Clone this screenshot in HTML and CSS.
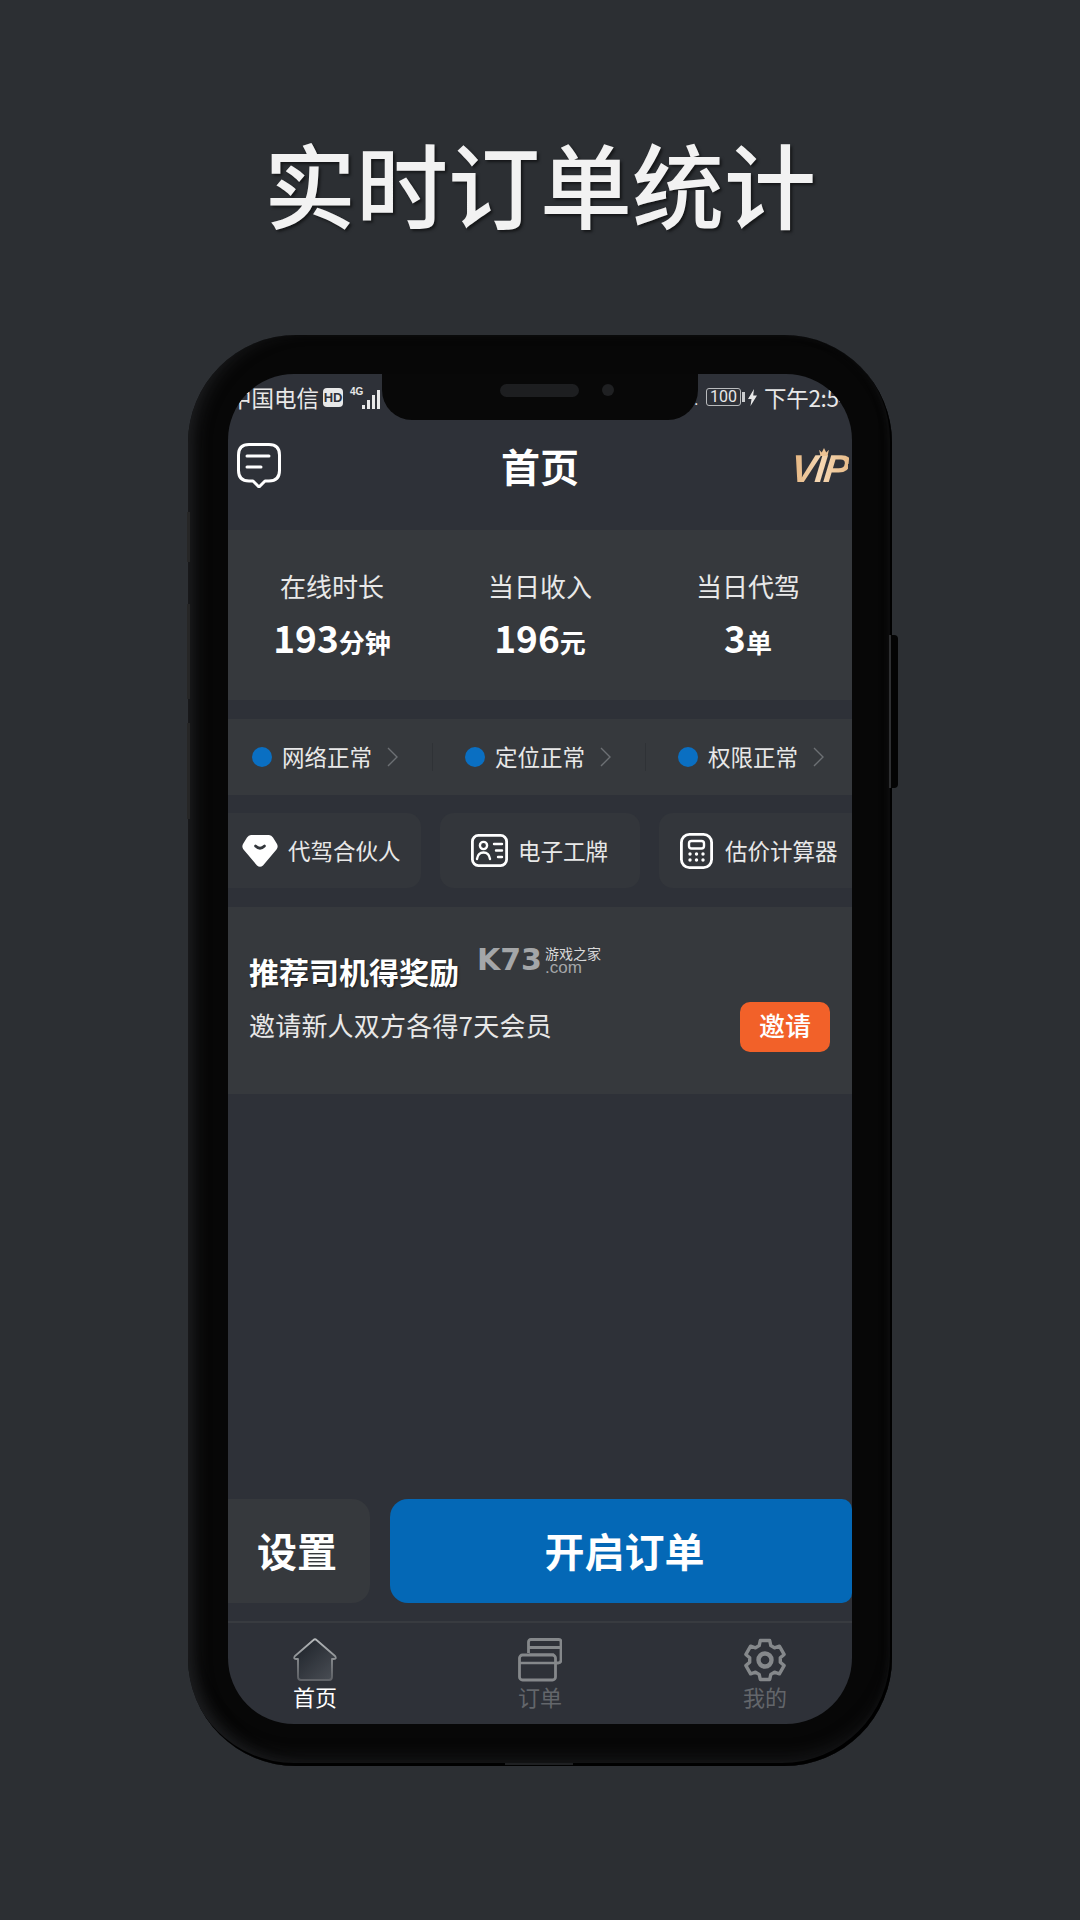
FILE: index.html
```html
<!DOCTYPE html>
<html lang="zh-CN">
<head>
    <meta charset="UTF-8">
    <meta name="viewport" content="width=device-width, initial-scale=1.0">
    <title>实时订单统计</title>

    <link rel="stylesheet" href="styles.css">
</head>
<body>

    <h1 class="promo-title">实时订单统计</h1>

    <div class="phone">
        <span class="side-btn side-power"></span>
        <span class="side-btn side-mute"></span>
        <span class="side-btn side-up"></span>
        <span class="side-btn side-down"></span>
        <span class="chin"></span>

        <div class="screen">
            <!-- Notch -->
            <div class="notch">
                <span class="speaker"></span>
                <span class="camera"></span>
            </div>

            <!-- Status bar -->
            <div class="statusbar">
                <div class="status-left">
                    <span>中国电信</span>
                    <span class="hd">HD</span>
                    <span class="net">4G</span>
                    <svg class="signal" width="20" height="20" viewBox="0 0 20 20">
                        <rect x="0" y="16" width="3" height="4" fill="#e8e8e8"/>
                        <rect x="5" y="11" width="3" height="9" fill="#e8e8e8"/>
                        <rect x="10" y="6" width="3" height="14" fill="#e8e8e8"/>
                        <rect x="15" y="1" width="3" height="19" fill="#e8e8e8"/>
                    </svg>
                </div>
                <div class="status-right">
                    <span class="dot-mark">.</span>
                    <span class="battery">100</span>
                    <span class="battery-nub"></span>
                    <svg class="bolt" width="9" height="17" viewBox="0 0 9 17">
                        <path d="M6 0 L0 10 H3.5 L2.5 17 L9 6.5 H5.2 Z" fill="#e8e8e8"/>
                    </svg>
                    <span class="clock">下午2:54</span>
                </div>
            </div>

            <!-- Header -->
            <header class="topbar">
                <svg class="chat-icon" width="44" height="45" viewBox="0 0 44 45">
                    <path d="M12 1.5 H32 Q42.5 1.5 42.5 12 V27.5 Q42.5 38 32 38 H28 L22 44 L16 38 H12 Q1.5 38 1.5 27.5 V12 Q1.5 1.5 12 1.5 Z" fill="none" stroke="#fff" stroke-width="3" stroke-linejoin="round"/>
                    <path d="M10 13 H32 M10 24 H24" stroke="#fff" stroke-width="3" stroke-linecap="round"/>
                </svg>
                <div class="page-title">首页</div>
                <div class="vip">
                    <span class="vip-text">VIP</span>
                    <svg class="vip-crown" width="10" height="8" viewBox="0 0 11 9">
                        <path d="M0 2 L3 5 L5.5 0 L8 5 L11 2 L9.5 9 H1.5 Z" fill="#ecc394"/>
                    </svg>
                </div>
            </header>

            <!-- Stats -->
            <section class="stats">
                <div class="stat">
                    <div class="stat-label">在线时长</div>
                    <div class="stat-value">193<small>分钟</small></div>
                </div>
                <div class="stat">
                    <div class="stat-label">当日收入</div>
                    <div class="stat-value">196<small>元</small></div>
                </div>
                <div class="stat">
                    <div class="stat-label">当日代驾</div>
                    <div class="stat-value">3<small>单</small></div>
                </div>
            </section>

            <!-- Health checks -->
            <section class="checks">
                <div class="check">
                    <span class="check-dot"></span>
                    <span class="check-text">网络正常</span>
                    <svg class="chevron" width="11" height="20" viewBox="0 0 11 20"><path d="M1 1 L10 10 L1 19" fill="none" stroke="#6d7074" stroke-width="1.4"/></svg>
                </div>
                <div class="check">
                    <span class="check-dot"></span>
                    <span class="check-text">定位正常</span>
                    <svg class="chevron" width="11" height="20" viewBox="0 0 11 20"><path d="M1 1 L10 10 L1 19" fill="none" stroke="#6d7074" stroke-width="1.4"/></svg>
                </div>
                <div class="check">
                    <span class="check-dot"></span>
                    <span class="check-text">权限正常</span>
                    <svg class="chevron" width="11" height="20" viewBox="0 0 11 20"><path d="M1 1 L10 10 L1 19" fill="none" stroke="#6d7074" stroke-width="1.4"/></svg>
                </div>
            </section>

            <!-- Shortcuts -->
            <section class="shortcuts">
                <div class="shortcut shortcut-partner">
                    <svg width="36" height="32" viewBox="0 0 36 32">
                        <path d="M9 0 H27 Q29.5 0 31 2.5 L35 9 Q36.5 12 34.5 14.5 L21 30.5 Q18 33 15 30.5 L1.5 14.5 Q-0.5 12 1 9 L5 2.5 Q6.5 0 9 0 Z" fill="#fff"/>
                        <path d="M13.5 11 Q18 15.5 22.5 11" fill="none" stroke="#33363b" stroke-width="2.6" stroke-linecap="round"/>
                    </svg>
                    <span>代驾合伙人</span>
                </div>
                <div class="shortcut shortcut-badge">
                    <svg width="37" height="33" viewBox="0 0 37 33">
                        <rect x="1.4" y="1.4" width="34.2" height="30.2" rx="6" fill="none" stroke="#fff" stroke-width="2.8"/>
                        <circle cx="12.5" cy="11.5" r="3.6" fill="none" stroke="#fff" stroke-width="2.4"/>
                        <path d="M6 25 Q7 18.5 12.5 18.5 Q18 18.5 19 25" fill="none" stroke="#fff" stroke-width="2.4" stroke-linecap="round"/>
                        <path d="M23 10 H31 M25 16.5 H31 M27 23 H31" stroke="#fff" stroke-width="2.4" stroke-linecap="round"/>
                    </svg>
                    <span>电子工牌</span>
                </div>
                <div class="shortcut shortcut-calc">
                    <svg width="33" height="36" viewBox="0 0 33 36">
                        <rect x="1.4" y="1.4" width="30.2" height="33.2" rx="8" fill="none" stroke="#fff" stroke-width="2.8"/>
                        <rect x="9" y="8" width="15" height="7.5" rx="2.5" fill="none" stroke="#fff" stroke-width="2.4"/>
                        <g fill="#fff">
                            <circle cx="10" cy="21" r="1.7"/><circle cx="16.5" cy="21" r="1.7"/><circle cx="23" cy="21" r="1.7"/>
                            <circle cx="10" cy="27" r="1.7"/><circle cx="16.5" cy="27" r="1.7"/><circle cx="23" cy="27" r="1.7"/>
                        </g>
                    </svg>
                    <span>估价计算器</span>
                </div>
            </section>

            <!-- Invite -->
            <section class="invite">
                <div class="invite-title">推荐司机得奖励</div>
                <div class="invite-row">
                    <span class="invite-text">邀请新人双方各得7天会员</span>
                    <span class="invite-btn">邀请</span>
                </div>
                <div class="watermark">
                    <span class="wm-logo">K73</span>
                    <span class="wm-site">
                        <span class="wm-cn">游戏之家</span>
                        <span class="wm-com">.com</span>
                    </span>
                </div>
            </section>

            <!-- Actions -->
            <div class="actions">
                <div class="btn-settings">设置</div>
                <div class="btn-start">开启订单</div>
            </div>

            <!-- Tab bar -->
            <nav class="tabbar">
                <div class="tab tab-active">
                    <svg width="44" height="44" viewBox="0 0 44 44">
                        <defs>
                            <linearGradient id="homeFill" x1="0" y1="0" x2="1" y2="1">
                                <stop offset="0" stop-color="#1b2027"/>
                                <stop offset="1" stop-color="#4b4f56"/>
                            </linearGradient>
                            <linearGradient id="homeStroke" x1="0" y1="0" x2="0" y2="1">
                                <stop offset="0" stop-color="#b4b7b9"/>
                                <stop offset="1" stop-color="#5f6267"/>
                            </linearGradient>
                        </defs>
                        <path d="M20.5 2 Q22 0.6 23.5 2 L42 18 Q44 21 41 21 H39 V39 Q39 42 36 42 H8 Q5 42 5 39 V21 H3 Q0 21 2 18 Z" fill="url(#homeFill)" stroke="url(#homeStroke)" stroke-width="1.8" stroke-linejoin="round"/>
                    </svg>
                    <span>首页</span>
                </div>
                <div class="tab">
                    <svg width="44" height="44" viewBox="0 0 44 44">
                        <path d="M10.5 15 V4 Q10.5 1.5 13 1.5 H41 Q43 1.5 43 4 V22 Q43 25 40 25 H38 M10.5 9.5 H43 M11 17 H36" fill="none" stroke="#85888b" stroke-width="2.8"/>
                        <rect x="1.5" y="17" width="36" height="25" rx="3" fill="#2e3138" stroke="#85888b" stroke-width="2.8"/>
                        <path d="M1.5 25 H37.5" stroke="#85888b" stroke-width="2.6"/>
                    </svg>
                    <span>订单</span>
                </div>
                <div class="tab">
                    <svg width="44" height="44" viewBox="0 0 44 44">
                        <path d="M16.2 7.6 L17.3 2.5 H26.7 L27.8 7.6 L31.5 9.8 L36.4 8.2 L41.1 16.4 L37.3 19.8 V24.2 L41.1 27.6 L36.4 35.8 L31.5 34.2 L27.8 36.4 L26.7 41.5 H17.3 L16.2 36.4 L12.5 34.2 L7.6 35.8 L2.9 27.6 L6.7 24.2 V19.8 L2.9 16.4 L7.6 8.2 L12.5 9.8 Z" fill="none" stroke="#85888b" stroke-width="3.4" stroke-linejoin="round"/>
                        <circle cx="22" cy="22" r="6.5" fill="none" stroke="#85888b" stroke-width="4.4"/>
                    </svg>
                    <span>我的</span>
                </div>
            </nav>
        </div>
    </div>

</body>
</html>
```

FILE: styles.css
```css
/* Global Reset */
* {
    margin: 0;
    padding: 0;
    box-sizing: border-box;
}

/* Body */
body {
    width: 1080px;
    height: 1920px;
    overflow: hidden;
    font-family: "Noto Sans CJK SC", "Noto Sans", sans-serif;
    background-color: #2c2f33;
    color: #ececec;
    display: flex;
    flex-direction: column;
    align-items: center;
}

/* Promo title */
.promo-title {
    margin-top: 122px;
    height: 120px;
    line-height: 120px;
    font-size: 92px;
    font-weight: 500;
    color: #f2f2f2;
    text-shadow: 2px 2px 3px rgba(0, 0, 0, 0.55);
}

/* Phone frame */
.phone {
    position: relative;
    margin-top: 93px;
    width: 704px;
    height: 1431px;
    padding: 39px 40px 42px;
    border-radius: 108px;
    background-color: #070707;
    box-shadow: inset -2px -3px 0 #000, inset 14px 0 16px -8px #1d1e20, inset 0 -14px 18px -8px #1b1c1e, inset -6px 0 10px -6px #161718;
}

.side-btn {
    position: absolute;
    background-color: #262626;
}

.side-power {
    right: -6px;
    top: 300px;
    width: 9px;
    height: 153px;
    border-left: 2px solid #2e2f31;
    border-radius: 0 4px 4px 0;
    background-color: #040404;
}

.side-mute { left: -1px; top: 177px; width: 3px; height: 50px; }
.side-up { left: -1px; top: 269px; width: 3px; height: 95px; }
.side-down { left: -1px; top: 388px; width: 3px; height: 96px; }

.chin {
    position: absolute;
    left: 317px;
    bottom: 1px;
    width: 68px;
    height: 2px;
    background-color: #1f2022;
}

.screen {
    position: relative;
    width: 624px;
    height: 1350px;
    overflow: hidden;
    border-radius: 66px;
    background-color: #2e3138;
    display: flex;
    flex-direction: column;
}

/* Notch */
.notch {
    position: absolute;
    top: 0;
    left: 154px;
    width: 316px;
    height: 46px;
    background-color: #080808;
    border-radius: 0 0 30px 30px;
    z-index: 10;
}

.speaker {
    position: absolute;
    left: 118px;
    top: 10px;
    width: 79px;
    height: 13px;
    border-radius: 7px;
    background-color: #1d1e20;
}

.camera {
    position: absolute;
    left: 220px;
    top: 10px;
    width: 12px;
    height: 12px;
    border-radius: 50%;
    background-color: #1f2022;
}

/* Status bar */
.statusbar {
    height: 46px;
    flex-shrink: 0;
    display: flex;
    align-items: center;
    font-size: 22.5px;
    color: #e8e8e8;
    white-space: nowrap;
}

.status-left {
    width: 466px;
    flex-shrink: 0;
    padding-left: 1px;
    display: flex;
    align-items: center;
}

.hd {
    margin-left: 4px;
    width: 20px;
    height: 19px;
    line-height: 19px;
    border-radius: 4px;
    background-color: #e8e8e8;
    color: #2e3138;
    font-family: "Liberation Sans", sans-serif;
    font-size: 13px;
    font-weight: bold;
    text-align: center;
}

.net {
    margin: -12px 0 0 7px;
    font-family: "Liberation Sans", sans-serif;
    font-size: 10px;
    font-weight: bold;
}

.signal {
    margin-left: -1px;
    margin-top: 3px;
}

.status-right {
    display: flex;
    align-items: center;
    flex-shrink: 0;
}

.dot-mark {
    font-family: "Liberation Sans", sans-serif;
    font-size: 16px;
    width: 12px;
    margin-top: 6px;
}

.battery {
    width: 35px;
    height: 18px;
    line-height: 16px;
    border: 1px solid #b9bbbd;
    border-radius: 3px;
    font-family: "Roboto", sans-serif;
    font-size: 16px;
    text-align: center;
}

.battery-nub {
    margin-left: 1px;
    width: 3px;
    height: 10px;
    background-color: #c9cbcd;
}

.bolt {
    margin-left: 3px;
}

.clock {
    margin-left: 7px;
    letter-spacing: -0.3px;
}

/* Header */
.topbar {
    position: relative;
    height: 110px;
    flex-shrink: 0;
    padding: 23px 4px 0 9px;
    display: flex;
    justify-content: space-between;
    align-items: flex-start;
}

.page-title {
    position: absolute;
    left: 0;
    right: 0;
    top: 22px;
    line-height: 46px;
    text-align: center;
    font-size: 39px;
    font-weight: bold;
    color: #fff;
}

.vip {
    position: relative;
    margin-top: 6px;
}

.vip-text {
    display: block;
    font-family: "Liberation Sans", sans-serif;
    font-size: 39px;
    line-height: 40px;
    font-weight: bold;
    font-style: italic;
    letter-spacing: -2px;
    transform: skewX(-6deg);
    background: linear-gradient(90deg, #e3b27c, #f6d8b4 50%, #e9bd8a);
    -webkit-background-clip: text;
    background-clip: text;
    color: transparent;
}

.vip-crown {
    position: absolute;
    left: 28px;
    top: -1px;
}

/* Stats */
.stats {
    height: 170px;
    flex-shrink: 0;
    padding-top: 37px;
    display: flex;
    background-color: #36393d;
}

.stat {
    flex: 1;
    text-align: center;
}

.stat-label {
    font-size: 26px;
    line-height: 38px;
    color: #e8e8e8;
}

.stat-value {
    margin-top: 7px;
    font-size: 37px;
    line-height: 50px;
    font-weight: bold;
    color: #fff;
}

.stat-value small {
    font-size: 26px;
}

/* Health checks */
.checks {
    margin-top: 19px;
    height: 76px;
    flex-shrink: 0;
    display: flex;
    align-items: center;
    background-color: #36393d;
    font-size: 22.5px;
    color: #e8e8e8;
}

.check {
    flex: 0 0 213px;
    height: 28px;
    padding-left: 32px;
    display: flex;
    align-items: center;
    border-right: 1px solid #2f3236;
}

.check:first-child {
    margin-left: -8px;
}

.check:last-child {
    border-right: none;
}

.check-dot {
    width: 20px;
    height: 20px;
    margin-right: 10px;
    border-radius: 50%;
    background-color: #0a6fc2;
}

.check-text {
    margin-top: -2px;
}

.chevron {
    margin-left: 15px;
}

/* Shortcuts */
.shortcuts {
    margin-top: 18px;
    height: 75px;
    flex-shrink: 0;
    display: flex;
    gap: 19px;
    font-size: 22.5px;
    color: #e8e8e8;
}

.shortcut {
    flex: 0 0 200px;
    display: flex;
    align-items: center;
    border-radius: 14px;
    background-color: #33363b;
}

.shortcut span {
    margin-top: -2px;
}

.shortcut-partner {
    flex-basis: 193px;
    padding-left: 14px;
    gap: 10px;
    border-radius: 0 14px 14px 0;
}

.shortcut-badge {
    padding-left: 31px;
    gap: 10px;
}

.shortcut-calc {
    padding-left: 21px;
    gap: 12px;
    border-radius: 14px 0 0 14px;
    white-space: nowrap;
}

/* Invite */
.invite {
    position: relative;
    margin-top: 19px;
    height: 187px;
    flex-shrink: 0;
    padding: 41px 22px 0 21px;
    background-color: #36393d;
}

.invite-title {
    font-size: 30px;
    line-height: 46px;
    font-weight: bold;
    color: #fff;
    text-shadow: 1px 1px 2px rgba(0, 0, 0, 0.5);
}

.invite-row {
    margin-top: 8px;
    display: flex;
    justify-content: space-between;
    align-items: center;
}

.invite-text {
    padding-bottom: 5px;
    font-size: 26px;
    color: #e8e8e8;
    letter-spacing: 0.2px;
}

.invite-btn {
    width: 90px;
    height: 50px;
    line-height: 46px;
    text-align: center;
    border-radius: 10px;
    background-color: #f26129;
    color: #fff;
    font-size: 26px;
    font-weight: 500;
}

.watermark {
    position: absolute;
    left: 249px;
    top: 38px;
    display: flex;
    align-items: center;
    gap: 3px;
    color: #a4a6a8;
}

.wm-logo {
    font-family: "DejaVu Sans", sans-serif;
    font-size: 30px;
    line-height: 30px;
    font-weight: bold;
}

.wm-site {
    display: flex;
    flex-direction: column;
    line-height: 13px;
}

.wm-cn {
    font-size: 14px;
    line-height: 15px;
    color: #d8d8d8;
}

.wm-com {
    font-family: "Liberation Sans", sans-serif;
    font-size: 17px;
}

/* Actions */
.actions {
    margin-top: auto;
    height: 104px;
    flex-shrink: 0;
    display: flex;
    gap: 20px;
    font-size: 40px;
    font-weight: bold;
    color: #fff;
}

.btn-settings {
    width: 142px;
    padding: 0 4px 3px 0;
    display: flex;
    justify-content: center;
    align-items: center;
    border-radius: 0 18px 18px 0;
    background-color: #36393d;
}

.btn-start {
    flex: 1;
    padding: 0 0 3px 7px;
    display: flex;
    justify-content: center;
    align-items: center;
    border-radius: 18px 10px 10px 18px;
    background-color: #0468b6;
}

/* Tab bar */
.tabbar {
    margin-top: 18px;
    height: 103px;
    flex-shrink: 0;
    padding-top: 15px;
    display: flex;
    justify-content: center;
    border-top: 2px solid #383b40;
}

.tab {
    flex: 0 0 225px;
    display: flex;
    flex-direction: column;
    align-items: center;
    font-size: 22px;
    line-height: 28px;
    color: #63666b;
}

.tab svg {
    display: block;
}

.tab-active {
    color: #fff;
}
```
